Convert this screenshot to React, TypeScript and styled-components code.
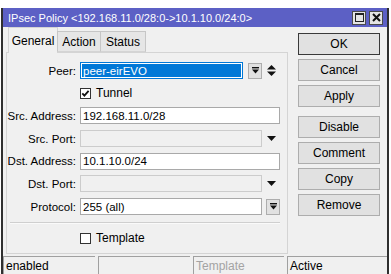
import React from "react";
import styled, { createGlobalStyle } from "styled-components";

const GlobalStyle = createGlobalStyle`
  html, body {
    margin: 0;
    padding: 0;
    background: #ffffff;
    overflow: hidden;
  }
  body {
    font-family: "Liberation Sans", Arial, sans-serif;
    font-size: 11.5px;
    color: #000;
  }
`;

const Page = styled.div`
  width: 391px;
  height: 274px;
  padding-top: 8px;
  box-sizing: border-box;
  overflow: hidden;
`;

const Window = styled.div`
  margin-left: 1px;
  width: 388px;
  height: 280px;
  box-sizing: border-box;
  border-left: 2px solid #2f2f2f;
  border-right: 2px solid #2f2f2f;
  background: #f0f0f0;
  display: flex;
  flex-direction: column;
`;

const TitleBar = styled.div`
  height: 19px;
  flex: none;
  background: #5c60c5;
  color: #fff;
  display: flex;
  align-items: center;
  gap: 3px;
  padding: 0 4px;
`;

const Title = styled.div`
  flex: 1;
  white-space: nowrap;
  overflow: hidden;
  font-size: 11px;
  padding-left: 1px;
`;

const TitleButton = styled.div`
  width: 14px;
  height: 14px;
  box-sizing: border-box;
  background: #e4e4e4;
  border: 1px solid #4a4a4a;
  display: flex;
  align-items: center;
  justify-content: center;
`;

const Body = styled.div`
  height: 229px;
  flex: none;
  display: flex;
`;

const LeftColumn = styled.div`
  width: 282px;
  margin-left: 3px;
  display: flex;
  flex-direction: column;
`;

const TabRow = styled.div`
  height: 25px;
  display: flex;
  align-items: flex-end;
  padding-left: 2px;
  position: relative;
  z-index: 1;
`;

const Tab = styled.div<{ $active?: boolean; $width: number }>`
  width: ${({ $width }) => $width}px;
  height: ${({ $active }) => ($active ? 26 : 21)}px;
  margin-bottom: ${({ $active }) => ($active ? -1 : 0)}px;
  box-sizing: border-box;
  border: 1px solid ${({ $active }) => ($active ? "#d4d4d4" : "#c6c6c6")};
  border-bottom: ${({ $active }) => ($active ? "none" : "1px solid #d4d4d4")};
  margin-left: ${({ $active }) => ($active ? 0 : -1)}px;
  background: ${({ $active }) => ($active ? "#f0f0f0" : "#e6e6e6")};
  display: flex;
  align-items: center;
  justify-content: center;
  font-size: 12px;
  padding-top: ${({ $active }) => ($active ? 0 : 1)}px;
`;

const Panel = styled.div`
  height: 202px;
  box-sizing: border-box;
  border: 1px solid #d4d4d4;
  padding: 9px 7px 0 0;
  display: flex;
  flex-direction: column;
  gap: 5.7px;
`;

const FormRow = styled.div`
  height: 17px;
  display: grid;
  grid-template-columns: 69px 200px;
  column-gap: 4px;
  align-items: center;
`;

const Label = styled.div`
  text-align: right;
  white-space: nowrap;
`;

const Controls = styled.div`
  display: flex;
  align-items: center;
  height: 17px;
`;

const Field = styled.div<{ $disabled?: boolean; $width?: number; $focused?: boolean }>`
  width: ${({ $width }) => ($width ? `${$width}px` : "auto")};
  flex: ${({ $width }) => ($width ? "none" : "1")};
  height: 17px;
  box-sizing: border-box;
  background: ${({ $disabled }) => ($disabled ? "#f0f0f0" : "#fff")};
  border: 1px solid
    ${({ $disabled, $focused }) => ($focused ? "#0078d7" : $disabled ? "#cccccc" : "#a9a9a9")};
  padding: ${({ $focused }) => ($focused ? "1px" : "0 2px")};
  display: flex;
  align-items: center;
  white-space: nowrap;
  overflow: hidden;
`;

const Selection = styled.span`
  display: flex;
  align-items: center;
  height: 100%;
  width: 100%;
  background: #0078d7;
  color: #fff;
  padding-left: 1px;
`;

const DropButton = styled.div<{ $gap: number }>`
  width: 14px;
  height: 16px;
  margin-left: ${({ $gap }) => $gap}px;
  box-sizing: border-box;
  background: #e1e1e1;
  border: 1px solid #adadad;
  display: flex;
  align-items: center;
  justify-content: center;
`;

const ArrowSlot = styled.div`
  flex: 1;
  display: flex;
  align-items: center;
  justify-content: center;
`;

const CheckRow = styled.div`
  height: 17px;
  display: flex;
  align-items: center;
  padding-left: 73px;
  gap: 5px;
`;

const Box = styled.div`
  width: 11px;
  height: 11px;
  box-sizing: border-box;
  border: 1px solid #333;
  background: #fff;
  display: flex;
  align-items: center;
  justify-content: center;
`;

const CheckLabel = styled.span`
  font-size: 12px;
`;

const Separator = styled.div`
  height: 1px;
  margin: 1px 0 0 3px;
  background: #cfcfcf;
  border-bottom: 1px solid #fafafa;
`;

const ButtonColumn = styled.div`
  width: 82px;
  margin-left: 10px;
  padding-top: 6px;
  display: flex;
  flex-direction: column;
  gap: 4px;
`;

const Button = styled.div<{ $default?: boolean; $spaced?: boolean }>`
  height: 22px;
  box-sizing: border-box;
  background: #e1e1e1;
  border: 1px solid ${({ $default }) => ($default ? "#3a3a3a" : "#adadad")};
  margin-top: ${({ $spaced }) => ($spaced ? 5 : 0)}px;
  display: flex;
  align-items: center;
  justify-content: center;
  font-size: 12px;
`;

const StatusBar = styled.div`
  display: flex;
  gap: 3px;
  padding-top: 0;
`;

const StatusCell = styled.div<{ $width?: number; $muted?: boolean }>`
  width: ${({ $width }) => ($width ? `${$width}px` : "auto")};
  flex: ${({ $width }) => ($width ? "none" : "1")};
  height: 20px;
  box-sizing: border-box;
  border-top: 1px solid #a0a0a0;
  border-left: 1px solid #a0a0a0;
  padding: 2px 0 0 2px;
  color: ${({ $muted }) => ($muted ? "#a3a3a3" : "#000")};
  font-size: 12px;
  white-space: nowrap;
`;

const DropIcon = () => (
  <svg width="7" height="7" viewBox="0 0 7 7">
    <rect x="0" y="0" width="7" height="1.4" fill="#111" />
    <polygon points="0,2.5 7,2.5 3.5,6.5" fill="#111" />
  </svg>
);

const DownIcon = () => (
  <svg width="9" height="5" viewBox="0 0 9 5">
    <polygon points="0,0 9,0 4.5,5" fill="#111" />
  </svg>
);

const SpinIcon = () => (
  <svg width="9" height="11" viewBox="0 0 9 11">
    <polygon points="4.5,0 9,4.5 0,4.5" fill="#111" />
    <polygon points="0,6.5 9,6.5 4.5,11" fill="#111" />
  </svg>
);

const CheckIcon = () => (
  <svg width="9" height="9" viewBox="0 0 9 9">
    <polyline points="1.3,4.3 3.4,6.6 7.6,1.8" fill="none" stroke="#111" strokeWidth="1.8" />
  </svg>
);

const MaxIcon = () => (
  <svg width="9" height="9" viewBox="0 0 9 9">
    <rect x="0.5" y="0.5" width="8" height="8" fill="none" stroke="#222" strokeWidth="1" />
    <rect x="0.5" y="0.5" width="8" height="1.5" fill="#222" />
  </svg>
);

const CloseIcon = () => (
  <svg width="9" height="9" viewBox="0 0 9 9">
    <path d="M1 1 L8 8 M8 1 L1 8" stroke="#111" strokeWidth="2" />
  </svg>
);

export default function App() {
  return (
    <Page>
      <GlobalStyle />
      <Window>
        <TitleBar>
          <Title>IPsec Policy &lt;192.168.11.0/28:0-&gt;10.1.10.0/24:0&gt;</Title>
          <TitleButton>
            <MaxIcon />
          </TitleButton>
          <TitleButton>
            <CloseIcon />
          </TitleButton>
        </TitleBar>
        <Body>
          <LeftColumn>
            <TabRow>
              <Tab $active $width={50}>General</Tab>
              <Tab $width={44}>Action</Tab>
              <Tab $width={46}>Status</Tab>
            </TabRow>
            <Panel>
              <FormRow>
                <Label>Peer:</Label>
                <Controls>
                  <Field $focused $width={163}>
                    <Selection>peer-eirEVO</Selection>
                  </Field>
                  <DropButton $gap={5}>
                    <DropIcon />
                  </DropButton>
                  <ArrowSlot>
                    <SpinIcon />
                  </ArrowSlot>
                </Controls>
              </FormRow>
              <CheckRow>
                <Box>
                  <CheckIcon />
                </Box>
                <CheckLabel>Tunnel</CheckLabel>
              </CheckRow>
              <FormRow>
                <Label>Src. Address:</Label>
                <Controls>
                  <Field>192.168.11.0/28</Field>
                </Controls>
              </FormRow>
              <FormRow>
                <Label>Src. Port:</Label>
                <Controls>
                  <Field $disabled $width={182} />
                  <ArrowSlot>
                    <DownIcon />
                  </ArrowSlot>
                </Controls>
              </FormRow>
              <FormRow>
                <Label>Dst. Address:</Label>
                <Controls>
                  <Field>10.1.10.0/24</Field>
                </Controls>
              </FormRow>
              <FormRow>
                <Label>Dst. Port:</Label>
                <Controls>
                  <Field $disabled $width={182} />
                  <ArrowSlot>
                    <DownIcon />
                  </ArrowSlot>
                </Controls>
              </FormRow>
              <FormRow>
                <Label>Protocol:</Label>
                <Controls>
                  <Field $width={182}>255 (all)</Field>
                  <DropButton $gap={4}>
                    <DropIcon />
                  </DropButton>
                </Controls>
              </FormRow>
              <Separator />
              <CheckRow>
                <Box />
                <CheckLabel>Template</CheckLabel>
              </CheckRow>
            </Panel>
          </LeftColumn>
          <ButtonColumn>
            <Button $default>OK</Button>
            <Button>Cancel</Button>
            <Button>Apply</Button>
            <Button $spaced>Disable</Button>
            <Button>Comment</Button>
            <Button>Copy</Button>
            <Button>Remove</Button>
          </ButtonColumn>
        </Body>
        <StatusBar>
          <StatusCell $width={92}>enabled</StatusCell>
          <StatusCell $width={92} />
          <StatusCell $width={91} $muted>
            Template
          </StatusCell>
          <StatusCell>Active</StatusCell>
        </StatusBar>
      </Window>
    </Page>
  );
}
